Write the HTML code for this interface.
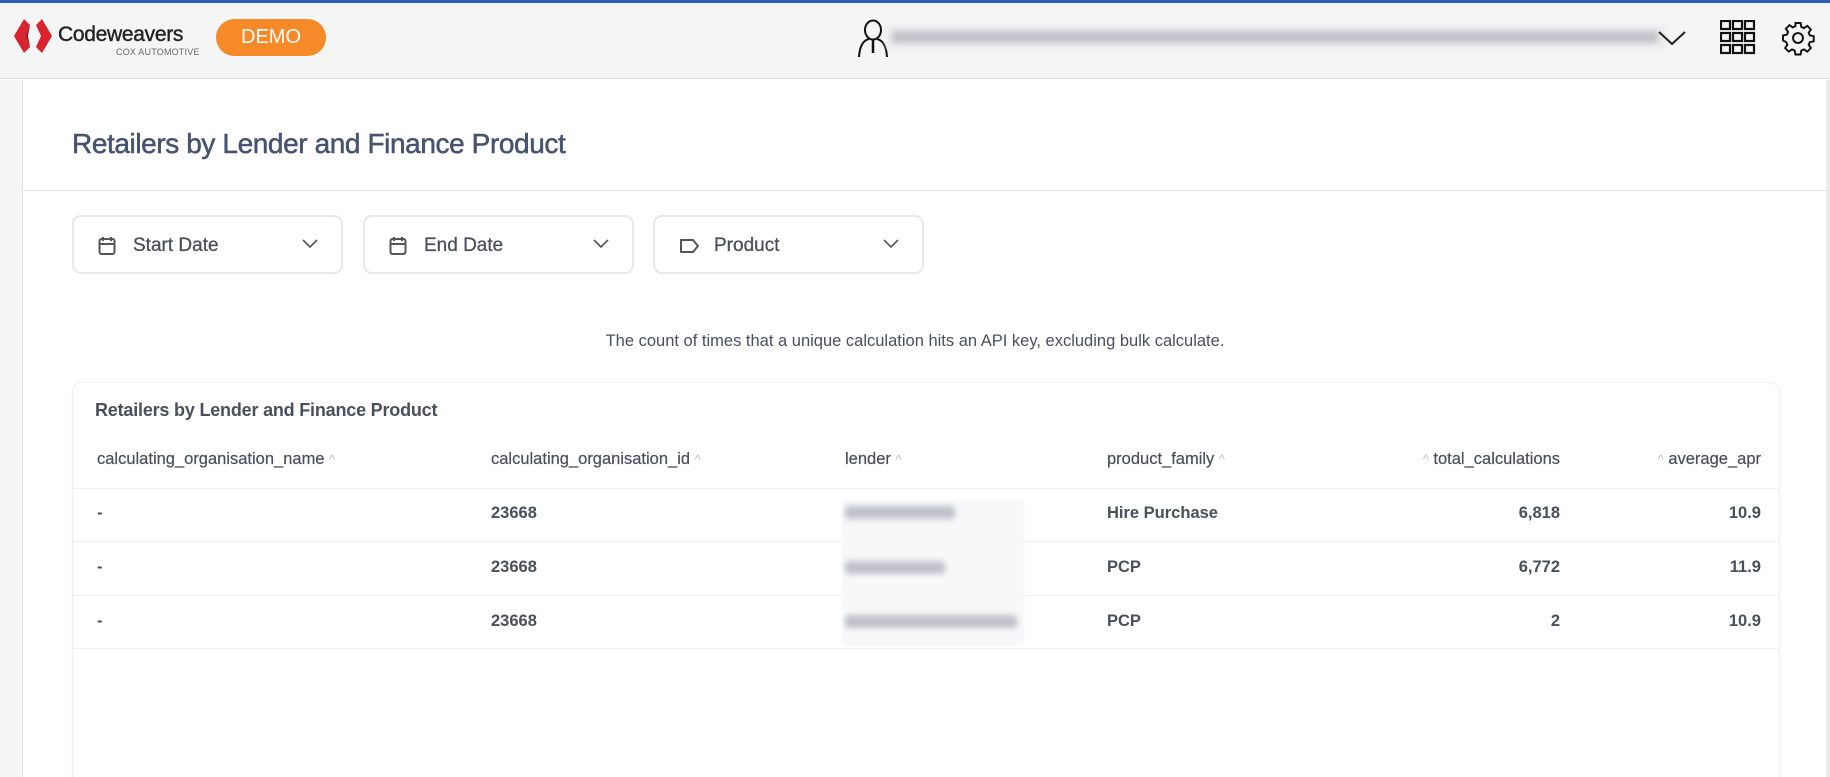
<!DOCTYPE html>
<html style="height:777px;overflow:hidden"><head><meta charset="utf-8"><style>
*{margin:0;padding:0;box-sizing:border-box}
body{width:1830px;height:777px;overflow:hidden;background:#fff;font-family:"Liberation Sans",sans-serif;position:relative;color:#4a4f5c}
.abs{position:absolute}
.top{left:0;top:0;width:1830px;height:3px;background:#2c5fb3}
.hdr{left:0;top:3px;width:1830px;height:76px;background:#f4f6f6;border-bottom:1px solid #dfe1e1}
.side{left:0;top:80px;width:23px;height:697px;background:#f4f6f6;border-right:1px solid #e2e4e4}
.demo{left:216px;top:19px;width:110px;height:37px;border-radius:19px;background:#f68a29;color:#fff;font-size:20px;text-align:center;line-height:37px}
.blur{background:#a7acb5;filter:blur(3px);opacity:.7;border-radius:3px}
.title{left:72px;top:128px;font-size:28px;color:#465371;letter-spacing:-.4px;-webkit-text-stroke:.5px #465371}
.sep{left:23px;top:190px;width:1807px;height:1px;background:#e6e8e8}
.fb{top:215px;width:271px;height:59px;border:2px solid #e7e8e9;border-radius:9px;font-size:19px;color:#4b4f5c}
.fb span{position:absolute;left:59px;top:18px;-webkit-text-stroke:.3px #4b4f5c}
.fb svg{position:absolute}
.desc{left:0;width:1830px;top:332px;text-align:center;font-size:16.5px;color:#4a4f5c}
.card{left:72px;top:382px;width:1708px;height:420px;border:1px solid #eeeff0;border-radius:10px;box-shadow:0 1px 3px rgba(0,0,0,.03)}
.ct{left:95px;top:400px;font-size:18px;font-weight:bold;color:#4a4f5c;letter-spacing:-.2px}
.th{top:450px;font-size:16.5px;color:#4a4f5c;white-space:nowrap;-webkit-text-stroke:.2px #4a4f5c}
.td{font-size:16.5px;font-weight:bold;color:#4a4f5c;white-space:nowrap}
.car{color:#b8bcc4;font-size:13px;-webkit-text-stroke:0}
.ln{left:73px;width:1706px;height:1px;background:#f0f1f2}
.r{text-align:right}
.lb{background:#f7f8f9;filter:blur(1px)}
</style></head><body>
<div class="abs top"></div>
<div class="abs hdr"></div>
<svg class="abs" style="left:14px;top:19px" width="40" height="34" viewBox="0 0 40 34">
<polygon points="10,0 0,17 10,34 16,28 11,17 16,6" fill="#d9232e"/>
<polygon points="28,0 22,6 27,17 22,28 28,34 38,17" fill="#d9232e"/>
<polygon points="16,6 11,17 16,28 14,17" fill="#a51a22"/>
</svg>
<div class="abs" style="left:58px;top:23px;font-size:21px;color:#222;letter-spacing:-.3px;-webkit-text-stroke:.4px #222">Codeweavers</div>
<div class="abs" style="left:116px;top:47px;font-size:9px;color:#666;letter-spacing:.2px">COX AUTOMOTIVE</div>
<div class="abs demo">DEMO</div>
<svg class="abs" style="left:856px;top:19px" width="34" height="38" viewBox="0 0 34 38"><ellipse cx="17" cy="11" rx="8" ry="9.5" fill="none" stroke="#111" stroke-width="2"/><path d="M3 38 Q4 22 13 20 M31 38 Q30 22 21 20" fill="none" stroke="#111" stroke-width="2"/><path d="M17 21 L17 34" stroke="#111" stroke-width="2.5"/></svg>
<div class="abs" style="left:886px;top:26px;width:780px;height:22px;background:#e9ebec;filter:blur(2px)"></div>
<div class="abs blur" style="left:892px;top:31px;width:766px;height:12px;opacity:.6"></div>
<svg class="abs" style="left:1657px;top:28px" width="30" height="20" viewBox="0 0 30 20"><path d="M2 4 L15 16 L28 4" fill="none" stroke="#222" stroke-width="2"/></svg>
<svg class="abs" style="left:1720px;top:20px" width="36" height="36" viewBox="0 0 36 36" fill="none" stroke="#111" stroke-width="2.2"><rect x="1" y="1" width="9" height="8"/><rect x="13" y="1" width="9" height="8"/><rect x="25" y="1" width="9" height="8"/><rect x="1" y="13" width="9" height="8"/><rect x="13" y="13" width="9" height="8"/><rect x="25" y="13" width="9" height="8"/><rect x="1" y="25" width="9" height="8"/><rect x="13" y="25" width="9" height="8"/><rect x="25" y="25" width="9" height="8"/></svg>
<svg class="abs" style="left:1780px;top:20px" width="36" height="36" viewBox="0 0 24 24" fill="none" stroke="#111" stroke-width="1.3"><circle cx="12" cy="12" r="3.3"/><path d="M10.3 2h3.4l.5 2.6 1.8.8 2.2-1.5 2.4 2.4-1.5 2.2.8 1.8 2.6.5v3.4l-2.6.5-.8 1.8 1.5 2.2-2.4 2.4-2.2-1.5-1.8.8-.5 2.6h-3.4l-.5-2.6-1.8-.8-2.2 1.5-2.4-2.4 1.5-2.2-.8-1.8L2 13.7v-3.4l2.6-.5.8-1.8-1.5-2.2 2.4-2.4 2.2 1.5 1.8-.8z"/></svg>
<div class="abs side"></div>
<div class="abs" style="left:1826px;top:80px;width:4px;height:697px;background:#ececec"></div>
<div class="abs title">Retailers by Lender and Finance Product</div>
<div class="abs sep"></div>

<div class="abs fb" style="left:72px"><svg style="left:24px;top:19px" width="18" height="20" viewBox="0 0 18 20" fill="none" stroke="#555" stroke-width="2"><rect x="1.5" y="3" width="15" height="15" rx="2"/><path d="M5 1v4M13 1v4M1.5 8h15"/></svg><span>Start Date</span><svg style="left:228px;top:22px" width="16" height="10" viewBox="0 0 16 10"><path d="M1 1l7 7 7-7" fill="none" stroke="#555" stroke-width="1.6"/></svg></div>
<div class="abs fb" style="left:363px"><svg style="left:24px;top:19px" width="18" height="20" viewBox="0 0 18 20" fill="none" stroke="#555" stroke-width="2"><rect x="1.5" y="3" width="15" height="15" rx="2"/><path d="M5 1v4M13 1v4M1.5 8h15"/></svg><span>End Date</span><svg style="left:228px;top:22px" width="16" height="10" viewBox="0 0 16 10"><path d="M1 1l7 7 7-7" fill="none" stroke="#555" stroke-width="1.6"/></svg></div>
<div class="abs fb" style="left:653px"><svg style="left:24px;top:21px" width="22" height="16" viewBox="0 0 22 16" fill="none" stroke="#555" stroke-width="2"><path d="M2 2h12l5 6-5 6H2z" stroke-linejoin="round"/></svg><span>Product</span><svg style="left:228px;top:22px" width="16" height="10" viewBox="0 0 16 10"><path d="M1 1l7 7 7-7" fill="none" stroke="#555" stroke-width="1.6"/></svg></div>

<div class="abs desc">The count of times that a unique calculation hits an API key, excluding bulk calculate.</div>

<div class="abs card"></div>
<div class="abs ct">Retailers by Lender and Finance Product</div>
<div class="abs th" style="left:97px">calculating_organisation_name <span class="car">^</span></div>
<div class="abs th" style="left:491px">calculating_organisation_id <span class="car">^</span></div>
<div class="abs th" style="left:845px">lender <span class="car">^</span></div>
<div class="abs th" style="left:1107px">product_family <span class="car">^</span></div>
<div class="abs th r" style="left:1360px;width:200px"><span class="car">^</span> total_calculations</div>
<div class="abs th r" style="left:1561px;width:200px"><span class="car">^</span> average_apr</div>
<div class="abs ln" style="top:488px"></div>
<div class="abs ln" style="top:541px"></div>
<div class="abs ln" style="top:595px"></div>
<div class="abs ln" style="top:648px"></div>

<div class="abs lb" style="left:842px;top:500px;width:182px;height:146px"></div>

<div class="abs td" style="left:97px;top:504px">-</div>
<div class="abs td" style="left:491px;top:504px">23668</div>
<div class="abs blur" style="left:845px;top:506px;width:110px;height:13px"></div>
<div class="abs td" style="left:1107px;top:504px">Hire Purchase</div>
<div class="abs td r" style="left:1360px;width:200px;top:504px">6,818</div>
<div class="abs td r" style="left:1561px;width:200px;top:504px">10.9</div>

<div class="abs td" style="left:97px;top:558px">-</div>
<div class="abs td" style="left:491px;top:558px">23668</div>
<div class="abs blur" style="left:845px;top:561px;width:100px;height:13px"></div>
<div class="abs td" style="left:1107px;top:558px">PCP</div>
<div class="abs td r" style="left:1360px;width:200px;top:558px">6,772</div>
<div class="abs td r" style="left:1561px;width:200px;top:558px">11.9</div>

<div class="abs td" style="left:97px;top:612px">-</div>
<div class="abs td" style="left:491px;top:612px">23668</div>
<div class="abs blur" style="left:845px;top:615px;width:172px;height:13px"></div>
<div class="abs td" style="left:1107px;top:612px">PCP</div>
<div class="abs td r" style="left:1360px;width:200px;top:612px">2</div>
<div class="abs td r" style="left:1561px;width:200px;top:612px">10.9</div>
</body></html>
